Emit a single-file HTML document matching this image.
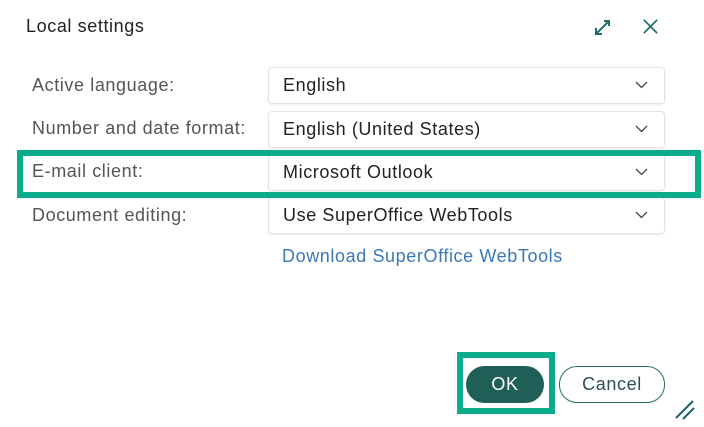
<!DOCTYPE html>
<html><head><style>
body{margin:0;width:704px;height:427px;background:#fff;font-family:"Liberation Sans",sans-serif;position:relative;overflow:hidden;letter-spacing:0.6px}
.a{position:absolute}
.lbl{font-size:18px;color:#555;left:32px}
.sel{left:268px;width:395px;height:35px;border:1px solid #e3e3e3;border-radius:4px;box-shadow:0 1px 2px rgba(0,0,0,.08);font-size:18px;color:#222;line-height:35px;text-indent:14px}
.sel svg{position:absolute;right:16px;top:13px}
</style></head><body>
<div class="a" style="left:26px;top:16px;font-size:18px;color:#222">Local settings</div>
<svg class="a" style="left:594px;top:18px" width="18" height="18" viewBox="0 0 18 18"><path d="M2 16L15 3M10 3H15V8M2 10V16H8" stroke="#1f6e6a" stroke-width="2" fill="none"/></svg>
<svg class="a" style="left:642px;top:18px" width="17" height="17" viewBox="0 0 18 18"><path d="M2 2L16 16M16 2L2 16" stroke="#1f6e6a" stroke-width="1.8"/></svg>

<div class="a lbl" style="top:75px">Active language:</div>
<div class="a sel" style="top:67px">English<svg width="13" height="8"><path d="M1 1L6.5 6.5L12 1" stroke="#444" stroke-width="1.3" fill="none"/></svg></div>
<div class="a lbl" style="top:118px">Number and date format:</div>
<div class="a sel" style="top:111px">English (United States)<svg width="13" height="8"><path d="M1 1L6.5 6.5L12 1" stroke="#444" stroke-width="1.3" fill="none"/></svg></div>
<div class="a lbl" style="top:161px">E-mail client:</div>
<div class="a sel" style="top:154px">Microsoft Outlook<svg width="13" height="8"><path d="M1 1L6.5 6.5L12 1" stroke="#444" stroke-width="1.3" fill="none"/></svg></div>
<div class="a lbl" style="top:205px">Document editing:</div>
<div class="a sel" style="top:197px">Use SuperOffice WebTools<svg width="13" height="8"><path d="M1 1L6.5 6.5L12 1" stroke="#444" stroke-width="1.3" fill="none"/></svg></div>
<div class="a" style="left:282px;top:246px;font-size:18px;color:#3a78b8">Download SuperOffice WebTools</div>

<div class="a" style="left:17px;top:150px;width:672px;height:36px;border:6px solid #0aac8c"></div>

<div class="a" style="left:457px;top:352px;width:86px;height:50px;border:6px solid #0aac8c"></div>
<div class="a" style="left:466px;top:366px;width:78px;height:37px;border-radius:19px;background:#1f5f57;color:#fff;font-size:18px;text-align:center;line-height:37px">OK</div>
<div class="a" style="left:559px;top:366px;width:104px;height:35px;border-radius:18px;border:1px solid #2b6b63;color:#2b4f55;font-size:18px;text-align:center;line-height:35px">Cancel</div>
<svg class="a" style="left:674px;top:399px" width="22" height="22" viewBox="0 0 22 22"><path d="M2 19L19 2M9 20L20 9" stroke="#1f5f6e" stroke-width="2"/></svg>
</body></html>
